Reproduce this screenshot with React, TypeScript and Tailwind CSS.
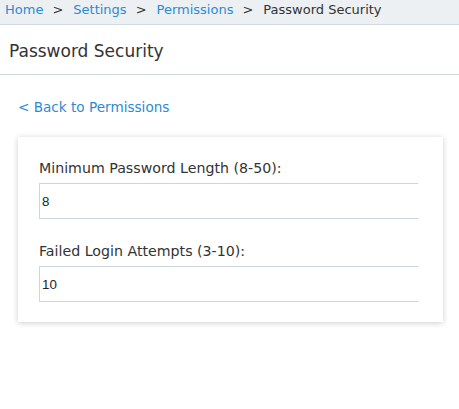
import React from "react";

const crumbs = [
    { label: "Home", href: "#" },
    { label: "Settings", href: "#" },
    { label: "Permissions", href: "#" },
];

function Breadcrumbs() {
    return (
        <div className="flex items-center border-b border-[#d3dadf] bg-[#ecf0f2] pb-[5px] pl-[5px] text-[13px] leading-[19px] text-[#333]">
            {crumbs.map((crumb) => (
                <React.Fragment key={crumb.label}>
                    <a href={crumb.href} className="text-[#2b8ad4]">
                        {crumb.label}
                    </a>
                    <span className="ml-[9px] mr-[10px] text-[#333]">&gt;</span>
                </React.Fragment>
            ))}
            <span>Password Security</span>
        </div>
    );
}

function Field({ label, value }: { label: string; value: string }) {
    return (
        <div className="overflow-hidden">
            <label className="block text-[14.2px] leading-[20px] text-[#333]">
                {label}
            </label>
            <input
                type="text"
                defaultValue={value}
                className="mt-[5px] block h-[36px] w-[120%] border border-[#cdd6dc] bg-white px-[2px] font-['Liberation_Sans',Arial,sans-serif] text-[13.333px] text-[#222] outline-none"
            />
        </div>
    );
}

export default function App() {
    return (
        <div className="min-h-[409px] bg-white font-['DejaVu_Sans',Verdana,sans-serif]">
            <Breadcrumbs />
            <div className="border-b border-[#d3dadf] pb-[11px] pl-[9px] pt-[14px] text-[17px] leading-[24px] text-[#333]">
                Password Security
            </div>
            <div className="pl-[18px] pr-[16px]">
                <a
                    href="#"
                    className="mt-[22px] block text-[13.6px] leading-[20px] text-[#2b8ad4]"
                >
                    &lt; Back to Permissions
                </a>
                <div className="mt-[20px] flex flex-col gap-[22px] bg-white pb-[20px] pl-[21px] pr-[25px] pt-[21px] shadow-[0_1px_6px_rgba(0,0,0,0.2)]">
                    <Field label="Minimum Password Length (8-50):" value="8" />
                    <Field label="Failed Login Attempts (3-10):" value="10" />
                </div>
            </div>
        </div>
    );
}
